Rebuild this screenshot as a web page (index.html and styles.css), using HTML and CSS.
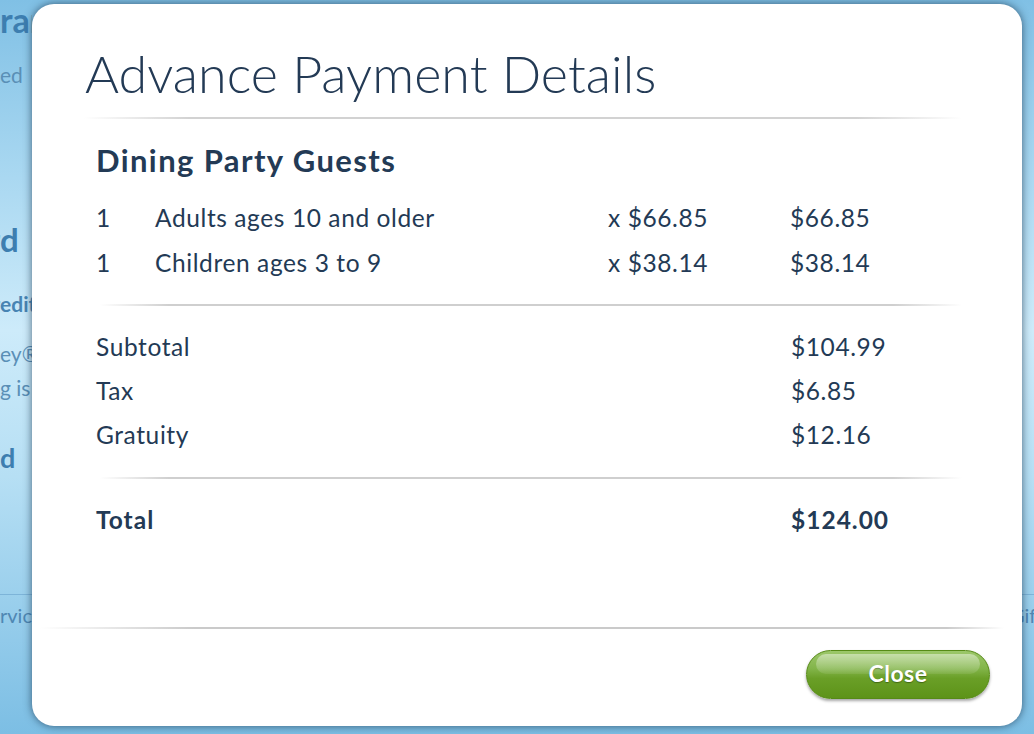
FILE: index.html
```html
<!DOCTYPE html>
<html lang="en">
<head>
    <meta charset="UTF-8">
    <meta name="viewport" content="width=device-width, initial-scale=1.0">
    <title>Advance Payment Details</title>
    <link rel="stylesheet" href="styles.css">
</head>
<body>
    <div class="page">
        <div class="side">
            <p class="bg-h1"><span class="lead">Restau</span>rant</p>
            <p class="bg-text bg-confirm"><span class="lead">Confirm</span>ed</p>
            <p class="bg-h2 bg-card"><span class="lead">Car</span>d</p>
            <p class="bg-h3"><span class="lead">Cr</span>edit</p>
            <p class="bg-text bg-plan"><span class="lead">Disn</span>ey®</p>
            <p class="bg-text bg-dining"><span class="lead">Dinin</span>g is</p>
            <p class="bg-h2 bg-holder"><span class="lead">Car</span>d</p>
        </div>
        <div class="bg-footer">
            <div class="foot-left"><p><span class="lead">Customer Se</span>rvice</p></div>
            <div class="foot-right"><p>Gift</p></div>
        </div>
    </div>

    <div class="overlay">
        <div class="modal">
            <h1 class="modal-title">Advance Payment Details</h1>
            <div class="rule rule-title"></div>

            <div class="modal-body">
                <h2 class="section-title">Dining Party Guests</h2>

                <div class="line-item">
                    <span>1</span>
                    <span>Adults ages 10 and older</span>
                    <span>x $66.85</span>
                    <span>$66.85</span>
                </div>
                <div class="line-item">
                    <span>1</span>
                    <span>Children ages 3 to 9</span>
                    <span>x $38.14</span>
                    <span>$38.14</span>
                </div>

                <div class="rule rule-mid"></div>

                <div class="summary-row"><span>Subtotal</span><span>$104.99</span></div>
                <div class="summary-row"><span>Tax</span><span>$6.85</span></div>
                <div class="summary-row"><span>Gratuity</span><span>$12.16</span></div>

                <div class="rule rule-mid"></div>

                <div class="summary-row total-row"><span>Total</span><span>$124.00</span></div>
            </div>

            <div class="modal-footer">
                <div class="rule rule-footer"></div>
                <div class="footer-actions">
                    <button class="btn-close" type="button">Close</button>
                </div>
            </div>
        </div>
    </div>
</body>
</html>
```

FILE: styles.css
```css
html, body {
    margin: 0;
    padding: 0;
}
body {
    width: 1034px;
    height: 734px;
    overflow: hidden;
    position: relative;
    font-family: Lato, "Liberation Sans", sans-serif;
    background: linear-gradient(to bottom, #80c0e5 0%, #a6d6f0 22%, #cdebfa 45%, #b6dff4 65%, #7cbee4 100%);
}

/* page behind the dialog */
.page {
    height: 734px;
}
.side {
    width: 32px;
    overflow: hidden;
}
.side p {
    margin: 0 0 0 -200px;
    white-space: nowrap;
}
.lead {
    display: inline-block;
    width: 200px;
    text-align: right;
    white-space: nowrap;
}
.bg-h1 {
    font-size: 34px;
    line-height: 40px;
    font-weight: 700;
    color: #3d7eb0;
}
.bg-text {
    font-size: 21px;
    line-height: 30px;
    color: #5a8fb6;
}
.bg-h2 {
    font-size: 33px;
    line-height: 40px;
    font-weight: 700;
    color: #3d7eb0;
}
.side .bg-h3 {
    font-size: 21px;
    line-height: 30px;
    font-weight: 700;
    color: #4784b3;
    margin-top: 30px;
}
.side .bg-confirm { margin-top: 20px; }
.side .bg-card { margin-top: 129px; }
.side .bg-plan { margin-top: 20px; }
.side .bg-dining { margin-top: 4px; }
.side .bg-holder {
    margin-top: 37px;
    font-size: 27px;
    line-height: 36px;
}
.bg-footer {
    position: absolute;
    top: 594px;
    left: 0;
    width: 1034px;
    border-top: 1px solid rgba(70, 130, 180, 0.35);
    display: flex;
    justify-content: space-between;
}
.bg-footer p {
    margin: 5px 0 0;
    font-size: 20px;
    line-height: 30px;
    color: #4f87b3;
    white-space: nowrap;
}
.foot-left {
    width: 32px;
    overflow: hidden;
}
.foot-left p {
    margin-left: -200px;
}
.foot-right {
    width: 24px;
    overflow: hidden;
}

/* dialog */
.overlay {
    position: absolute;
    top: 0;
    left: 0;
    right: 0;
    bottom: 0;
    padding: 4px 12px 8px 32px;
    box-sizing: border-box;
    display: flex;
}
.modal {
    flex: 1;
    display: flex;
    flex-direction: column;
    background: #fff;
    border-radius: 22px;
    box-shadow: 0 0 9px rgba(20, 45, 70, 0.7);
    color: #233a55;
}
.modal-title {
    margin: 39px 0 0 53px;
    font-size: 52px;
    line-height: 60px;
    font-weight: 300;
    letter-spacing: 0.05px;
}
.rule {
    height: 2px;
}
.rule-title {
    margin: 14px 60px 0 52px;
    background: linear-gradient(to right, rgba(200, 200, 200, 0) 0%, #d2d2d2 12%, #d2d2d2 88%, rgba(200, 200, 200, 0) 100%);
}
.modal-body {
    padding-left: 64px;
    padding-right: 60px;
}
.section-title {
    margin: 24px 0 17px;
    font-size: 31px;
    line-height: 35px;
    font-weight: 700;
    letter-spacing: 1.4px;
}
.line-item {
    display: grid;
    grid-template-columns: 59px 453px 182px auto;
    font-size: 24.5px;
    line-height: 45px;
    letter-spacing: 0.6px;
}
.summary-row {
    display: grid;
    grid-template-columns: 695px auto;
    font-size: 24.5px;
    line-height: 44px;
    letter-spacing: 0.6px;
}
.total-row {
    font-weight: 700;
    letter-spacing: 1px;
    margin-top: 2px;
}
.rule-mid {
    margin: 19px 0 19px 4px;
    background: linear-gradient(to right, rgba(200, 200, 200, 0) 0%, #cfcfcf 8%, #cfcfcf 92%, rgba(200, 200, 200, 0) 100%);
}
.modal-body .summary-row + .rule-mid {
    margin-top: 20px;
}
.modal-footer {
    margin-top: auto;
    padding-bottom: 27px;
}
.rule-footer {
    margin: 0 18px 0 8px;
    background: linear-gradient(to right, rgba(200, 200, 200, 0) 0%, #cacaca 16%, #cacaca 94%, rgba(200, 200, 200, 0) 100%);
}
.footer-actions {
    display: flex;
    justify-content: flex-end;
    padding: 21px 32px 0 0;
}
.btn-close {
    position: relative;
    width: 184px;
    height: 49px;
    border-radius: 25px;
    border: 1px solid #568a16;
    background: linear-gradient(to bottom, #9cc76a 0%, #82b449 38%, #6a9f27 58%, #5d9319 100%);
    box-shadow: 0 2px 3px rgba(0, 0, 0, 0.35);
    color: #fff;
    font-family: Lato, "Liberation Sans", sans-serif;
    font-size: 23px;
    font-weight: 700;
    letter-spacing: 0.5px;
    text-shadow: 0 1px 1px rgba(40, 70, 10, 0.6);
    cursor: pointer;
    padding: 0 0 3px;
}
.btn-close::before {
    content: "";
    position: absolute;
    top: 3px;
    left: 9px;
    right: 9px;
    height: 20px;
    border-radius: 14px;
    background: linear-gradient(to bottom, rgba(255, 255, 255, 0.45), rgba(255, 255, 255, 0.08));
}
```
